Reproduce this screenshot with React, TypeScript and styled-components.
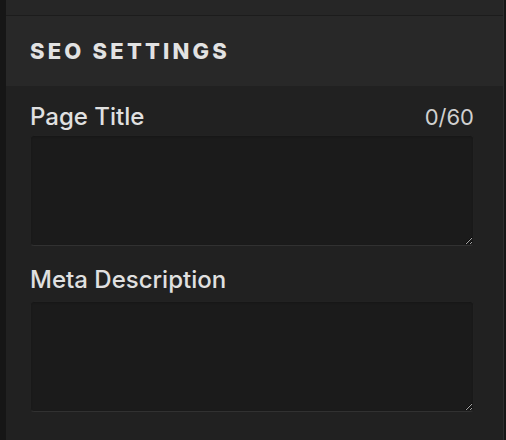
import * as React from "react";
import styled, { createGlobalStyle } from "styled-components";

const GlobalStyle = createGlobalStyle`
  html, body {
    margin: 0;
    padding: 0;
    background: #161616;
  }
  body {
    font-family: Inter, "Noto Sans", sans-serif;
    -webkit-font-smoothing: antialiased;
  }
`;

const Frame = styled.div`
  display: flex;
  width: 506px;
  height: 440px;
  overflow: hidden;
`;

const Gutter = styled.div<{ $width: number }>`
  flex: 0 0 ${p => p.$width}px;
  background: #161616;
`;

const Panel = styled.div`
  flex: 1;
  display: flex;
  flex-direction: column;
  background: #212121;
  border-right: 1px solid #2e2e2e;
`;

const TopStrip = styled.div`
  height: 15px;
  background: #262626;
  border-bottom: 1px solid #1c1c1c;
`;

const SectionHeader = styled.div`
  height: 70px;
  display: flex;
  align-items: center;
  padding: 0 24px;
  background: #282828;
`;

const SectionTitle = styled.h2`
  margin: 0;
  font-size: 22px;
  line-height: 26px;
  font-weight: 800;
  letter-spacing: 3.2px;
  color: #e2e2e2;
`;

const Body = styled.div`
  display: flex;
  flex-direction: column;
  gap: 20px;
  padding: 17px 29px 0 24px;
`;

const Field = styled.div<{ $gap: number }>`
  display: flex;
  flex-direction: column;
  gap: ${p => p.$gap}px;
`;

const LabelRow = styled.div`
  display: flex;
  align-items: baseline;
  justify-content: space-between;
  height: 28px;
`;

const Label = styled.label`
  font-size: 24px;
  line-height: 28px;
  font-weight: 500;
  color: #e0e0e0;
`;

const Counter = styled.span`
  font-size: 22px;
  line-height: 28px;
  font-weight: 400;
  color: #d0d0d0;
`;

const TextArea = styled.textarea`
  box-sizing: border-box;
  width: 100%;
  height: 111px;
  margin: 0;
  padding: 10px 12px;
  background: #1b1b1b;
  border: 1px solid #222222;
  border-bottom-color: #313131;
  border-radius: 4px;
  color: #e0e0e0;
  font-family: inherit;
  font-size: 18px;
  outline: none;
  resize: vertical;
  box-shadow: inset 0 1px 2px rgba(0, 0, 0, 0.2);
`;

const App = () => {
  const [title, setTitle] = React.useState("");
  const [description, setDescription] = React.useState("");

  return (
    <>
      <GlobalStyle />
      <Frame>
        <Gutter $width={6} />
        <Panel>
          <TopStrip />
          <SectionHeader>
            <SectionTitle>SEO SETTINGS</SectionTitle>
          </SectionHeader>
          <Body>
            <Field $gap={4}>
              <LabelRow>
                <Label htmlFor="seo-title">Page Title</Label>
                <Counter>{title.length}/60</Counter>
              </LabelRow>
              <TextArea
                id="seo-title"
                maxLength={60}
                value={title}
                onChange={e => setTitle(e.target.value)}
              />
            </Field>
            <Field $gap={7}>
              <LabelRow>
                <Label htmlFor="seo-description">Meta Description</Label>
              </LabelRow>
              <TextArea
                id="seo-description"
                value={description}
                onChange={e => setDescription(e.target.value)}
              />
            </Field>
          </Body>
        </Panel>
        <Gutter $width={2} />
      </Frame>
    </>
  );
};

export default App;
